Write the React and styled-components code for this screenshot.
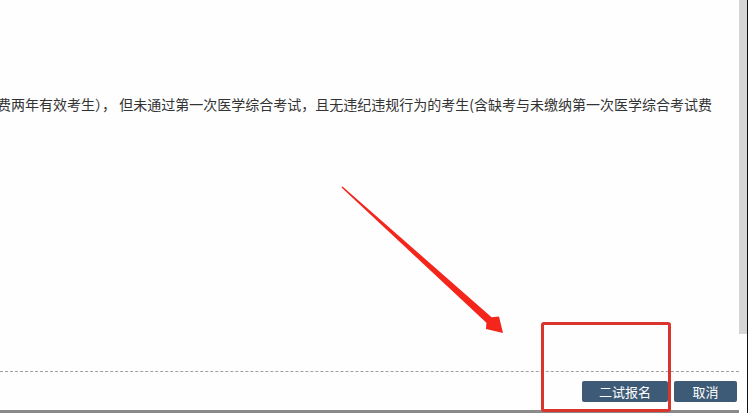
import styled, { createGlobalStyle } from 'styled-components';

const GlobalStyle = createGlobalStyle`
  html, body {
    margin: 0;
    padding: 0;
    background: #fff;
  }
  body {
    font-family: "Noto Sans CJK SC", "Noto Sans", sans-serif;
  }
`;

const Page = styled.div`
  position: relative;
  width: 748px;
  height: 413px;
  display: flex;
  overflow: hidden;
  background: #fefefe;
`;

const Main = styled.div`
  flex: 1;
  display: flex;
  flex-direction: column;
  min-width: 0;
`;

const Body = styled.div`
  flex: 1;
  padding: 94px 27px 0 0;
  overflow: hidden;
`;

const Notice = styled.p`
  margin: 0;
  display: flex;
  justify-content: flex-end;
  white-space: nowrap;
  overflow: hidden;
  font-size: 14px;
  line-height: 20px;
  color: #333;
`;

const Footer = styled.div`
  display: flex;
  justify-content: flex-end;
  gap: 6px;
  padding: 9px 2px 8px 0;
  border-top: 1px dashed #a0a0a0;
`;

const Button = styled.button`
  width: ${(p) => p.$w}px;
  height: 21px;
  padding: 0;
  border: none;
  border-radius: 2px;
  background: #3d5a77;
  color: #fff;
  font-family: "Noto Sans CJK SC", sans-serif;
  font-size: 13px;
  line-height: 21px;
  cursor: pointer;
`;

const BottomBar = styled.div`
  height: 3px;
  background: #8a8a8a;
`;

const Scrollbar = styled.div`
  width: 8px;
  display: flex;
  flex-direction: column;
  border-right: 1px solid #111;
`;

const Thumb = styled.div`
  height: 334px;
  background: #d6d6d6;
`;

const Highlight = styled.div`
  position: absolute;
  left: 541px;
  top: 322px;
  width: 124px;
  height: 84px;
  border: 3px solid #d9352d;
  border-radius: 3px;
`;

const Overlay = styled.svg`
  position: absolute;
  left: 0;
  top: 0;
  pointer-events: none;
`;

function Arrow() {
  return (
    <Overlay width="748" height="413" viewBox="0 0 748 413">
      <polygon
        points="341.5,187.5 342.5,186.5 491.6,317.2 499,316.5 503,333 486,329 486.4,322.8"
        fill="#f4261c"
      />
    </Overlay>
  );
}

export default function App() {
  return (
    <>
      <GlobalStyle />
      <Page>
        <Main>
          <Body>
            <Notice>
              <span>
                第一次缴费两年有效考生）， 但未通过第一次医学综合考试，且无违纪违规行为的考生(含缺考与未缴纳第一次医学综合考试费
              </span>
            </Notice>
          </Body>
          <Footer>
            <Button $w={86}>二试报名</Button>
            <Button $w={63}>取消</Button>
          </Footer>
          <BottomBar />
        </Main>
        <Scrollbar>
          <Thumb />
        </Scrollbar>
        <Highlight />
        <Arrow />
      </Page>
    </>
  );
}
